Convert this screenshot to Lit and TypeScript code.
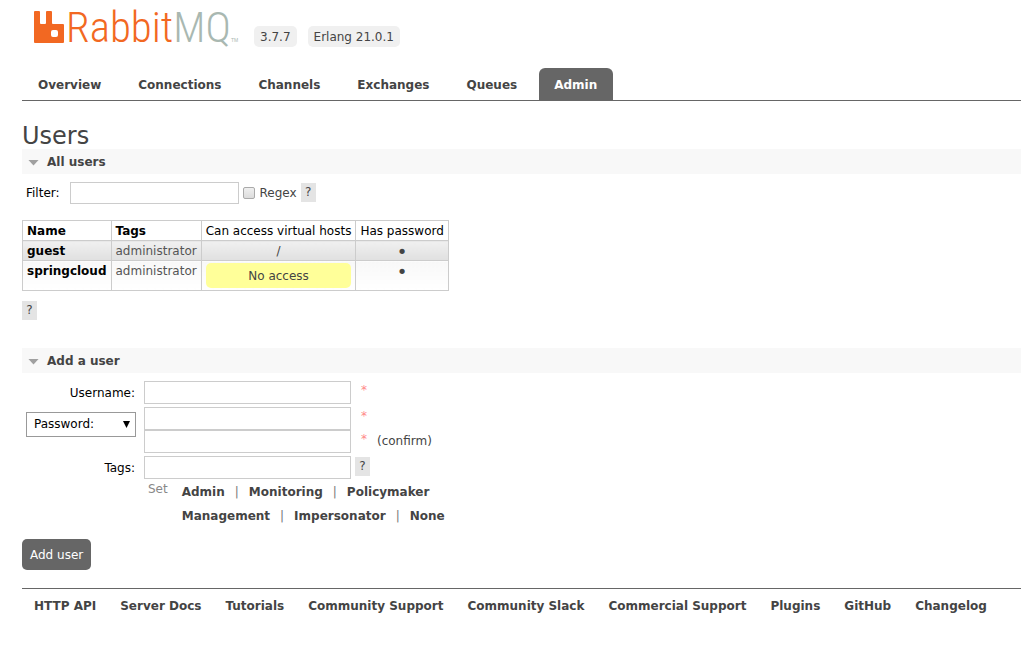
import { LitElement, html, css } from "lit";
import { customElement, state } from "lit/decorators.js";

interface User {
  name: string;
  tags: string;
  vhosts: string;
  hasPassword: boolean;
}

@customElement("app-root")
export class AppRoot extends LitElement {
  @state() private users: User[] = [
    { name: "guest", tags: "administrator", vhosts: "/", hasPassword: true },
    { name: "springcloud", tags: "administrator", vhosts: "", hasPassword: true },
  ];

  @state() private tags = "";

  private tabs = ["Overview", "Connections", "Channels", "Exchanges", "Queues", "Admin"];

  private tagRows = [
    ["Admin", "Monitoring", "Policymaker"],
    ["Management", "Impersonator", "None"],
  ];

  private footerLinks = [
    "HTTP API",
    "Server Docs",
    "Tutorials",
    "Community Support",
    "Community Slack",
    "Commercial Support",
    "Plugins",
    "GitHub",
    "Changelog",
  ];

  static styles = css`
    :host {
      display: block;
      box-sizing: border-box;
      padding-left: 22px;
      font: 12px/15px "DejaVu Sans", Verdana, sans-serif;
      color: #444;
      background: #fff;
    }
    *, *::before { box-sizing: border-box; }
    a { color: inherit; text-decoration: none; }
    input, select, button { font: inherit; margin: 0; }

    .top { display: flex; align-items: flex-start; height: 68px; padding-left: 12px; }
    .logo { display: block; width: 208px; height: 56px; margin-right: 12px; }
    .word { font-family: "Liberation Sans Narrow", "Roboto Condensed", Lato, sans-serif; font-size: 43px; font-weight: 300; }
    .tm { font-family: "Liberation Sans", sans-serif; font-size: 5px; fill: #a9b8b1; }
    .pill { margin: 26px 11px 0 0; padding: 4px 6px 2px; border-radius: 5px; background: #f0f0f0; }

    .tabs { display: flex; gap: 6px; padding-left: 1px; border-bottom: 1px solid #666; }
    .tab { padding: 10px 16px 7px 15px; border-radius: 6px 6px 0 0; font-weight: bold; }
    .tab.selected { background: #666; color: #fff; }

    h1 { margin: 22px 0 0; font-size: 24px; line-height: 26px; font-weight: normal; }
    h2 {
      display: flex; align-items: center; gap: 8px; margin: 0; padding: 6px 6px 4px;
      background: #f8f8f8; font-size: 12px; line-height: 15px;
    }
    h2::before {
      content: ""; width: 11px; height: 6px; background: #a0a0a0;
      clip-path: polygon(0 0, 100% 0, 50% 100%);
    }

    .filter { display: flex; align-items: center; padding: 8px 4px 16px; }
    .filter .caption { color: #000; margin-right: 10px; padding-top: 1px; }
    .text { border: 1px solid #ccc; background: #fff; padding: 3px; height: 23px; outline: none; }
    .filter .text { width: 169px; height: 22px; margin-right: 4px; }
    .check {
      appearance: none; width: 12px; height: 12px; margin-right: 5px; border: 1px solid #aaa;
      border-radius: 2px; background: linear-gradient(#efefef, #dcdcdc);
    }
    .help { display: block; width: 15px; height: 19px; padding: 2px 4px; border: 0; background: #e4e4e4; color: #444; }
    .filter .help, .line .help { align-self: flex-start; margin: 1px 0 0 4px; }

    table { border-collapse: collapse; }
    th, td { border: 1px solid #ccc; padding: 3px 4px 1px; text-align: left; vertical-align: top; }
    th { color: #000; }
    th.plain { font-weight: normal; }
    td { color: #555; }
    td.name { color: #000; font-weight: bold; }
    td.mid { text-align: center; color: #444; }
    .shade { background: linear-gradient(#f0f0f0, #e0e0e0); }
    .pale { background: linear-gradient(#f8f8f8, #fff); }
    td.boxed { padding: 2px 4px; }
    .warning { padding: 6px 5px 4px; border-radius: 5px; background: #ff9; }
    .dot { display: block; font-size: 18px; line-height: 15px; height: 15px; }
    .after { padding: 10px 0 28px; display: flex; }

    .fields {
      display: grid; grid-template-columns: 110px 1fr; column-gap: 8px; row-gap: 3px;
      padding: 8px 4px 0;
    }
    .fields label { justify-self: end; align-self: center; color: #000; padding: 2px 1px 0 0; }
    .line { display: flex; align-items: center; }
    .line .text { width: 207px; }
    .req { align-self: flex-start; padding: 2px 10px 0; color: #f88; }
    .kind {
      position: relative; align-self: start; margin-top: 5px; color: #000;
    }
    .kind select {
      appearance: none; width: 100%; height: 25px; padding: 0 7px; border: 1px solid #999;
      border-radius: 0; background: #fff; color: #000;
    }
    .kind svg { position: absolute; right: 6px; top: 9px; pointer-events: none; }

    .tags { display: flex; gap: 14px; padding: 1px 0 11px 126px; }
    .set { color: #888; line-height: 18px; }
    .choices { line-height: 24px; }
    .choice { border: 0; padding: 0; background: none; font-weight: bold; color: #444; line-height: 24px; }
    .bar { padding: 0 10px; color: #777; }

    .submit { border: 0; border-radius: 5px; padding: 9px 8px 7px; background: #666; color: #fff; display: block; }
    footer { display: flex; flex-wrap: wrap; gap: 24px; margin-top: 18px; padding: 10px 12px; border-top: 1px solid #666; font-weight: bold; }
  `;

  private pickTag(tag: string) {
    const value = tag.toLowerCase();
    this.tags = tag === "None" ? "" : this.tags ? `${this.tags}, ${value}` : value;
  }

  private required() {
    return html`<span class="req">*</span>`;
  }

  render() {
    return html`
      <header class="top">
        <svg class="logo" viewBox="0 0 208 56" role="img" aria-label="RabbitMQ">
          <path fill="#f26822" fill-rule="evenodd"
            d="M1 11h4q1 0 1 1v11q0 1 1 1h4q1 0 1-1V12q0-1 1-1h4q1 0 1 1v11q0 1 1 1h10q1 0 1 1v17q0 1-1 1H1q-1 0-1-1V12q0-1 1-1zM19 30q-2 0-2 2v3q0 2 2 2h3q2 0 2-2v-3q0-2-2-2z" />
          <text class="word" x="32" y="42"><tspan fill="#f26822">Rabbit</tspan><tspan fill="#a9b8b1">MQ</tspan></text>
          <text class="tm" x="197" y="42">TM</text>
        </svg>
        <span class="pill">3.7.7</span>
        <span class="pill">Erlang 21.0.1</span>
      </header>

      <nav class="tabs">
        ${this.tabs.map((t) => html`<a href="#" class="tab ${t === "Admin" ? "selected" : ""}">${t}</a>`)}
      </nav>

      <main>
        <h1>Users</h1>
        <section>
          <h2>All users</h2>
          <div class="filter">
            <label class="caption" for="filter">Filter:</label>
            <input class="text" id="filter" type="text" />
            <input class="check" id="regex" type="checkbox" />
            <label for="regex">Regex</label>
            <button class="help" type="button">?</button>
          </div>
          <table>
            <thead>
              <tr>
                <th>Name</th>
                <th>Tags</th>
                <th class="plain">Can access virtual hosts</th>
                <th class="plain">Has password</th>
              </tr>
            </thead>
            <tbody>
              ${this.users.map((u, i) => {
                const tone = i % 2 ? "pale" : "shade";
                return html`<tr>
                  <td class="name ${tone}">${u.name}</td>
                  <td class="${tone}">${u.tags}</td>
                  <td class="mid ${tone} ${u.vhosts ? "" : "boxed"}">${u.vhosts || html`<div class="warning">No access</div>`}</td>
                  <td class="mid ${tone}">${u.hasPassword ? html`<span class="dot">•</span>` : ""}</td>
                </tr>`;
              })}
            </tbody>
          </table>
          <div class="after"><button class="help" type="button">?</button></div>
        </section>

        <section>
          <h2>Add a user</h2>
          <form @submit=${(e: Event) => e.preventDefault()}>
            <div class="fields">
              <label for="username">Username:</label>
              <div class="line"><input class="text" id="username" type="text" />${this.required()}</div>

              <div class="kind">
                <select aria-label="Password type">
                  <option>Password:</option>
                  <option>No password</option>
                </select>
                <svg width="7" height="7" viewBox="0 0 7 7"><path d="M0 0h7L3.500 7z" /></svg>
              </div>
              <div>
                <div class="line">
                  <input class="text" type="password" aria-label="Password" />${this.required()}
                </div>
                <div class="line">
                  <input class="text" type="password" aria-label="Confirm password" />${this.required()}
                  <span>(confirm)</span>
                </div>
              </div>

              <label for="tags">Tags:</label>
              <div class="line">
                <input class="text" id="tags" type="text" .value=${this.tags} />
                <button class="help" type="button">?</button>
              </div>
            </div>
            <div class="tags">
              <span class="set">Set</span>
              <div class="choices">
                ${this.tagRows.map(
                  (row) => html`<div>${row.map(
                    (t, i) => html`${i ? html`<span class="bar">|</span>` : ""}<button
                      class="choice" type="button" @click=${() => this.pickTag(t)}>${t}</button>`
                  )}</div>`
                )}
              </div>
            </div>
            <button class="submit" type="submit">Add user</button>
          </form>
        </section>
      </main>

      <footer>${this.footerLinks.map((l) => html`<a href="#">${l}</a>`)}</footer>
    `;
  }
}
